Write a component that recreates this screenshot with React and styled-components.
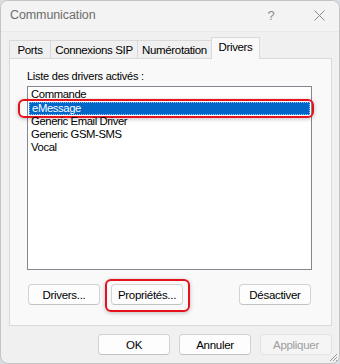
import React from "react";
import styled, { createGlobalStyle } from "styled-components";

const Global = createGlobalStyle`
  html, body { margin: 0; padding: 0; background: #d9dde3; }
  body { font-family: "Liberation Sans", Arial, sans-serif; }
  * { box-sizing: border-box; }
`;

const Window = styled.div`
  position: relative;
  width: 340px;
  height: 364px;
  background: #f0f0f0;
  border: 1px solid #c4c4c4;
  border-radius: 8px;
  overflow: hidden;
  display: flex;
  flex-direction: column;
`;

const TitleBar = styled.div`
  height: 31px;
  flex: none;
  background: #f3f3f3;
  border-bottom: 1px solid #e9e9e9;
  display: flex;
  align-items: center;
  padding-left: 9px;
`;

const Title = styled.div`
  flex: 1;
  font-size: 12.5px;
  color: #6d6d6d;
  letter-spacing: -0.1px;
  margin-top: -2px;
`;

const Help = styled.div`
  width: 20px;
  text-align: center;
  font-size: 13px;
  color: #8a8a8a;
  margin-right: 26px;
  margin-top: -2px;
`;

const CloseBtn = styled.div`
  width: 24px;
  margin-right: 8px;
  display: flex;
  justify-content: center;
  margin-top: -2px;
`;

const Body = styled.div`
  flex: 1;
  padding: 5px 7px 0 8px;
  display: flex;
  flex-direction: column;
`;

const Tabs = styled.div`
  display: flex;
  align-items: flex-end;
  height: 22px;
  position: relative;
  z-index: 1;
  margin-bottom: -1px;
`;

const Tab = styled.div`
  height: ${(p) => (p.$active ? "22px" : "19px")};
  width: ${(p) => p.$w}px;
  margin-left: ${(p) => (p.$first ? "0" : "-1px")};
  border: 1px solid #d9d9d9;
  border-bottom: ${(p) => (p.$active ? "none" : "1px solid #d9d9d9")};
  background: ${(p) => (p.$active ? "#f9f9f9" : "#f0f0f0")};
  font-size: 11.5px;
  letter-spacing: -0.35px;
  color: #000;
  display: flex;
  justify-content: center;
  padding-top: 3px;
`;

const Panel = styled.div`
  width: 323px;
  height: 268px;
  background: #f9f9f9;
  border: 1px solid #d9d9d9;
  padding: 9px 20px 0 17px;
  display: flex;
  flex-direction: column;
`;

const Label = styled.div`
  font-size: 11px;
  letter-spacing: -0.25px;
  color: #000;
  height: 18px;
  padding-top: 2px;
`;

const List = styled.div`
  width: 285px;
  height: 184px;
  background: #fff;
  border: 1px solid #828790;
  padding: 1px 1px;
  display: flex;
  flex-direction: column;
`;

const Item = styled.div`
  position: relative;
  height: 13px;
  line-height: 13px;
  padding-left: 2px;
  font-size: 11.3px;
  letter-spacing: -0.4px;
  color: ${(p) => (p.$selected ? "#fff" : "#000")};
  background: ${(p) => (p.$selected ? "#0066c8" : "transparent")};
  border: ${(p) => (p.$selected ? "1px dotted #9ac3ff" : "none")};
  ${(p) => (p.$selected ? "line-height: 11px; margin-top: 1px;" : "")}
`;

const Mark = styled.div`
  position: absolute;
  left: ${(p) => p.$l}px;
  right: ${(p) => p.$r}px;
  top: ${(p) => p.$t}px;
  bottom: ${(p) => p.$b}px;
  border: 2px solid #e3121b;
  border-radius: 6px;
  box-shadow: 0 1px 4px rgba(0, 0, 0, 0.25);
  pointer-events: none;
`;

const ButtonRow = styled.div`
  display: flex;
  align-items: center;
  margin-top: 14px;
  gap: 11px;
  padding-left: 1px;
`;

const Spacer = styled.div`
  flex: 1;
`;

const Button = styled.div`
  position: relative;
  width: 72px;
  height: 21px;
  background: #fdfdfd;
  border: 1px solid #d2d2d2;
  border-bottom-color: #c2c2c2;
  border-radius: 4px;
  display: flex;
  align-items: center;
  justify-content: center;
  font-size: 11.5px;
  letter-spacing: -0.3px;
  color: ${(p) => (p.$disabled ? "#9d9d9d" : "#000")};
  ${(p) => (p.$disabled ? "background: #f5f5f5; border-color: #e3e3e3;" : "")}
`;

const Footer = styled.div`
  display: flex;
  justify-content: flex-end;
  gap: 9px;
  padding-top: 8px;
`;

const Grip = styled.svg`
  position: absolute;
  right: 1px;
  bottom: 1px;
`;

export default function App() {
  const items = ["Commande", "eMessage", "Generic Email Driver", "Generic GSM-SMS", "Vocal"];
  return (
    <>
      <Global />
      <Window>
        <TitleBar>
          <Title>Communication</Title>
          <Help>?</Help>
          <CloseBtn>
            <svg width="11" height="11" viewBox="0 0 11 11">
              <path d="M0.5 0.5 L10.5 10.5 M10.5 0.5 L0.5 10.5" stroke="#8a8a8a" strokeWidth="1" />
            </svg>
          </CloseBtn>
        </TitleBar>
        <Body>
          <Tabs>
            <Tab $first $w={42}>Ports</Tab>
            <Tab $w={88}>Connexions SIP</Tab>
            <Tab $w={75}>Numérotation</Tab>
            <Tab $active $w={49}>Drivers</Tab>
          </Tabs>
          <Panel>
            <Label>Liste des drivers activés :</Label>
            <List>
              {items.map((t) => (
                <Item key={t} $selected={t === "eMessage"}>
                  {t}
                  {t === "eMessage" && <Mark $l={-12} $r={-5} $t={-4} $b={-4} />}
                </Item>
              ))}
            </List>
            <ButtonRow>
              <Button>Drivers...</Button>
              <Button>
                Propriétés...
                <Mark $l={-7} $r={-8} $t={-6} $b={-8} />
              </Button>
              <Spacer />
              <Button>Désactiver</Button>
            </ButtonRow>
          </Panel>
          <Footer>
            <Button>OK</Button>
            <Button>Annuler</Button>
            <Button $disabled>Appliquer</Button>
          </Footer>
        </Body>
        <Grip width="10" height="10" viewBox="0 0 10 10">
          <path d="M9 2 L2 9 M9 5 L5 9 M9 8 L8 9" stroke="#9a9a9a" strokeWidth="1" />
        </Grip>
      </Window>
    </>
  );
}
